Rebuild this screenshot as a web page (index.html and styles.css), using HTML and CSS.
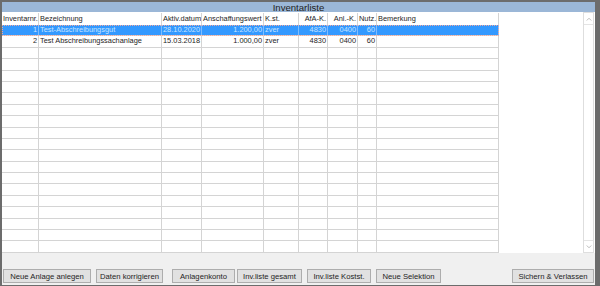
FILE: index.html
```
<html>
  <head>
    <link rel="stylesheet" href="styles.css">
  </head>
  <body>
    <div class="window">
      <div class="titlebar">Inventarliste</div>
      <div class="panel">
        <div class="grid">
          <div class="row head">
            <span>Inventarnr.</span><span>Bezeichnung</span><span>Aktiv.datum</span><span>Anschaffungswert</span><span>K.st.</span><span class="num">AfA-K.</span><span class="num">Anl.-K.</span><span class="num">Nutz.</span><span>Bemerkung</span>
          </div>
          <div class="row selected">
            <span class="num">1</span><span>Test-Abschreibungsgut</span><span>28.10.2020</span><span class="num">1.200,00</span><span>zver</span><span class="num">4830</span><span class="num">0400</span><span class="num">60</span><span></span>
          </div>
          <div class="row">
            <span class="num">2</span><span>Test Abschreibungssachanlage</span><span>15.03.2018</span><span class="num">1.000,00</span><span>zver</span><span class="num">4830</span><span class="num">0400</span><span class="num">60</span><span></span>
          </div>
          <div class="row"><span></span><span></span><span></span><span></span><span></span><span></span><span></span><span></span><span></span></div>
          <div class="row"><span></span><span></span><span></span><span></span><span></span><span></span><span></span><span></span><span></span></div>
          <div class="row"><span></span><span></span><span></span><span></span><span></span><span></span><span></span><span></span><span></span></div>
          <div class="row"><span></span><span></span><span></span><span></span><span></span><span></span><span></span><span></span><span></span></div>
          <div class="row"><span></span><span></span><span></span><span></span><span></span><span></span><span></span><span></span><span></span></div>
          <div class="row"><span></span><span></span><span></span><span></span><span></span><span></span><span></span><span></span><span></span></div>
          <div class="row"><span></span><span></span><span></span><span></span><span></span><span></span><span></span><span></span><span></span></div>
          <div class="row"><span></span><span></span><span></span><span></span><span></span><span></span><span></span><span></span><span></span></div>
          <div class="row"><span></span><span></span><span></span><span></span><span></span><span></span><span></span><span></span><span></span></div>
          <div class="row"><span></span><span></span><span></span><span></span><span></span><span></span><span></span><span></span><span></span></div>
          <div class="row"><span></span><span></span><span></span><span></span><span></span><span></span><span></span><span></span><span></span></div>
          <div class="row"><span></span><span></span><span></span><span></span><span></span><span></span><span></span><span></span><span></span></div>
          <div class="row"><span></span><span></span><span></span><span></span><span></span><span></span><span></span><span></span><span></span></div>
          <div class="row"><span></span><span></span><span></span><span></span><span></span><span></span><span></span><span></span><span></span></div>
          <div class="row"><span></span><span></span><span></span><span></span><span></span><span></span><span></span><span></span><span></span></div>
          <div class="row"><span></span><span></span><span></span><span></span><span></span><span></span><span></span><span></span><span></span></div>
          <div class="row"><span></span><span></span><span></span><span></span><span></span><span></span><span></span><span></span><span></span></div>
          <div class="row"><span></span><span></span><span></span><span></span><span></span><span></span><span></span><span></span><span></span></div>
        </div>
        <div class="filler"></div>
        <div class="scrollbar">
          <div class="arrow">
            <svg viewBox="0 0 8 5"><path d="M1 4.5 L4 1.5 L7 4.5"/></svg>
          </div>
          <div class="track"></div>
          <div class="arrow">
            <svg viewBox="0 0 8 5"><path d="M1 0.5 L4 3.5 L7 0.5"/></svg>
          </div>
        </div>
      </div>
      <div class="buttons">
        <button class="btn-new">Neue Anlage anlegen</button>
        <button class="btn-edit">Daten korrigieren</button>
        <button class="btn-account">Anlagenkonto</button>
        <button class="btn-all">Inv.liste gesamt</button>
        <button class="btn-cost">Inv.liste Kostst.</button>
        <button class="btn-select">Neue Selektion</button>
        <button class="btn-save">Sichern &amp; Verlassen</button>
      </div>
    </div>
  </body>
</html>
```

FILE: styles.css
```
:root {
  --frame-color: #6c6c6c;
  --window-color: #f0f0f0;
  --title-color: #9bb7d7;
  --line-color: #d4d4d4;
  --select-color: #3399ff;
  --select-text: #c8e4ff;
  --text-color: #1e1e1e;
  --button-color: #e1e1e1;
  --button-border: #adadad;
}

html {
  background-color: var(--frame-color);
}

body {
  margin: 0;
  padding: 2px 5px 1px 2px;
  font-family: "Liberation Sans", Arial, sans-serif;
  font-size: 7.4px;
  color: var(--text-color);
}

.window {
  background-color: var(--window-color);
  height: 283px;
  display: flex;
  flex-direction: column;
}

.titlebar {
  height: 10px;
  line-height: 11px;
  background-color: var(--title-color);
  text-align: center;
  font-size: 9.6px;
  color: #222;
}

.panel {
  height: 241px;
  background-color: #fff;
  display: flex;
}

.grid {
  width: 497px;
  display: flex;
  flex-direction: column;
}

.row {
  display: grid;
  grid-template-columns: 37px 123px 40px 62px 35px 29px 30px 19px 122px;
  height: 11.4px;
  box-sizing: border-box;
  border-bottom: 1px solid var(--line-color);
}

.row.head {
  height: 13px;
  padding-top: 1px;
  border-bottom: none;
}

.row span {
  border-right: 1px solid var(--line-color);
  padding: 0 1px 0 1px;
  line-height: 10.4px;
  white-space: nowrap;
  overflow: hidden;
}

.row.head span {
  line-height: 11px;
}

.row span.num {
  text-align: right;
}

.row.selected {
  background-color: var(--select-color);
  color: var(--select-text);
  outline: 1px dotted #f0a8a0;
  outline-offset: -1px;
}

.row.selected span {
  border-right-color: #7dbdff;
}

.filler {
  flex: 1;
}

.scrollbar {
  width: 9px;
  margin-right: 1px;
  border: 1px solid #dedede;
  display: flex;
  flex-direction: column;
}

.arrow {
  height: 11px;
  display: flex;
  align-items: center;
  justify-content: center;
}

.arrow svg {
  width: 6px;
  height: 4px;
  fill: none;
  stroke: #a6a6a6;
  stroke-width: 1;
}

.track {
  flex: 1;
  border-top: 1px solid #e4e4e4;
  border-bottom: 1px solid #e4e4e4;
}

.buttons {
  display: flex;
  padding-top: 16px;
  height: 14px;
}

button {
  height: 14px;
  padding: 0;
  background-color: var(--button-color);
  border: 1px solid var(--button-border);
  font-family: "Liberation Sans", Arial, sans-serif;
  font-size: 7.7px;
  color: var(--text-color);
}

.btn-new { width: 88px; margin-left: 1px; }
.btn-edit { width: 67px; margin-left: 5px; }
.btn-account { width: 63px; margin-left: 9px; }
.btn-all { width: 65px; margin-left: 2px; }
.btn-cost { width: 64px; margin-left: 5px; }
.btn-select { width: 65px; margin-left: 5px; }
.btn-save { width: 82px; margin-left: auto; margin-right: 1px; }
```
